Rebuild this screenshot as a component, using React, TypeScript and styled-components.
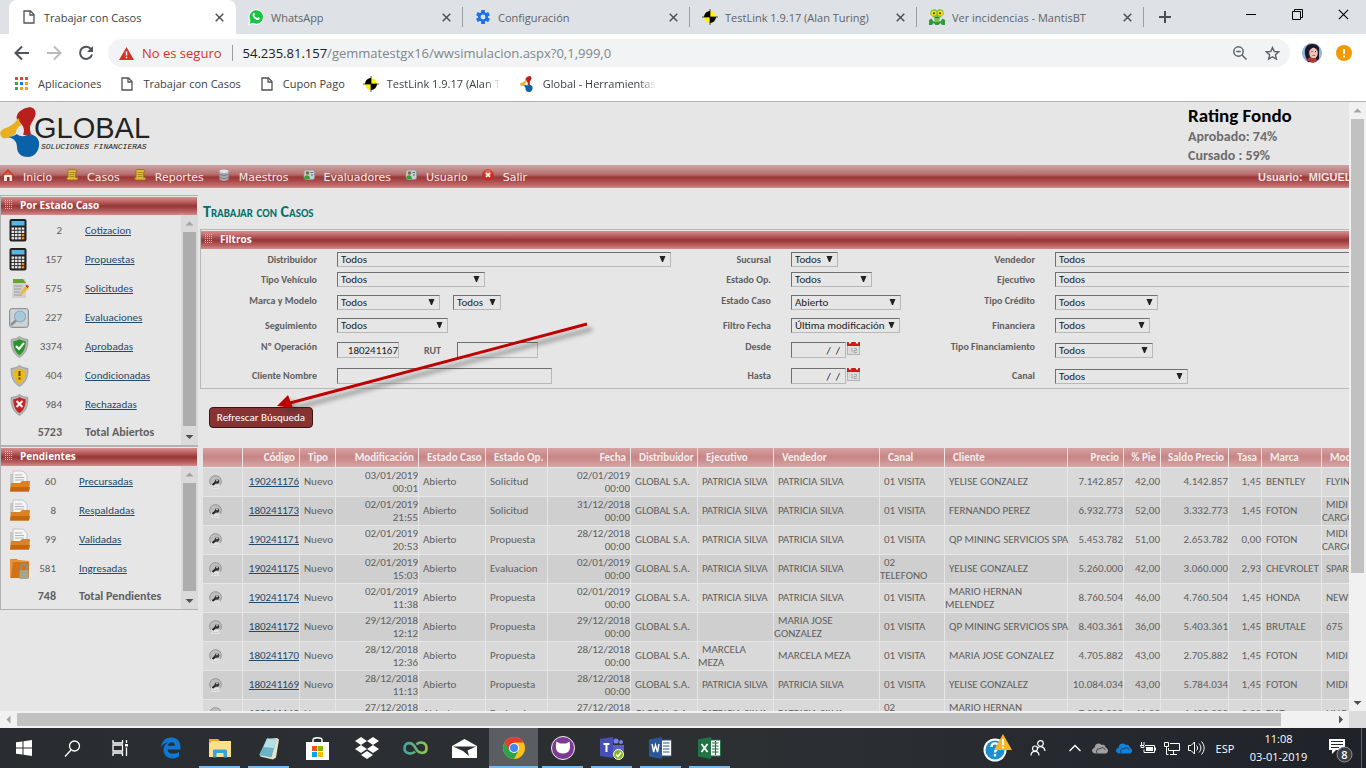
import React from 'react';
import styled, { createGlobalStyle, css } from 'styled-components';

const SEGOE = '"Open Sans", "Noto Sans", sans-serif';
const CALIBRI = 'Calibri, Carlito, "Open Sans", sans-serif';
const VERDANA = '"DejaVu Sans", "Noto Sans", sans-serif';

const GlobalStyle = createGlobalStyle`
  *, *::before, *::after { box-sizing: border-box; }
  body { margin: 0; overflow: hidden; background: #e6e6e6; }
  button, input, select { font-family: inherit; margin: 0; }
  svg { display: block; flex: none; }
`;

const Screen = styled.div`
  height: 100vh;
  display: flex;
  flex-direction: column;
  overflow: hidden;
  font-family: ${SEGOE};
`;

/* ---------- browser chrome ---------- */

const TabStrip = styled.div`
  display: flex;
  height: 34px;
  padding-left: 9px;
  background: #dee1e6;
  flex: none;
`;

const Tab = styled.div<{ $active?: boolean; $divided?: boolean }>`
  position: relative;
  display: flex;
  align-items: center;
  width: 227px;
  padding: 0 10px 0 12px;
  font-size: 11px;
  color: ${(p) => (p.$active ? '#3c4043' : '#5f6368')};
  background: ${(p) => (p.$active ? '#fff' : 'transparent')};
  border-radius: 8px 8px 0 0;
  ${(p) =>
    p.$divided &&
    css`
      &::after {
        content: '';
        position: absolute;
        right: 0;
        top: 7px;
        height: 20px;
        width: 1px;
        background: #9a9da1;
      }
    `}
`;

const TabTitle = styled.span`
  flex: 1;
  padding-left: 7px;
  white-space: nowrap;
`;

const IconSlot = styled.span`
  width: 16px;
  height: 16px;
  display: flex;
  align-items: center;
  justify-content: center;
`;

const IconButton = styled.button<{ $w?: number; $h?: number }>`
  display: flex;
  align-items: center;
  justify-content: center;
  width: ${(p) => p.$w ?? 32}px;
  height: ${(p) => p.$h ?? 28}px;
  padding: 0;
  border: 0;
  background: none;
  flex: none;
`;

const WindowControls = styled.div`
  display: flex;
  margin-left: auto;
`;

const Toolbar = styled.div`
  display: flex;
  align-items: center;
  height: 36px;
  padding: 2px 6px 0;
  background: #fff;
  flex: none;
`;

const Omnibox = styled.div`
  flex: 1;
  display: flex;
  align-items: center;
  height: 28px;
  margin: 0 6px;
  padding: 0 2px 0 11px;
  border-radius: 14px;
  background: #f1f3f4;
  font-size: 13px;
`;

const Insecure = styled.span`
  padding: 0 10px 0 8px;
  color: #d93025;
  white-space: nowrap;
`;

const UrlInput = styled.span`
  flex: 1;
  margin-left: 10px;
  color: #80868b;
  white-space: nowrap;
  b { font-weight: 400; color: #202124; }
`;

const Rule = styled.span<{ $h: number; $c: string }>`
  width: 1px;
  height: ${(p) => p.$h}px;
  background: ${(p) => p.$c};
`;

const BookmarkBar = styled.nav`
  display: flex;
  align-items: center;
  height: 32px;
  padding: 0 13px 4px;
  gap: 18px;
  background: #fff;
  border-bottom: 1px solid #b4b4b4;
  flex: none;
`;

const Bookmark = styled.a<{ $fade?: boolean }>`
  display: flex;
  align-items: center;
  gap: 8px;
  color: #3c4043;
  font-size: 11px;
  text-decoration: none;
  white-space: nowrap;
  ${(p) =>
    p.$fade &&
    css`
      max-width: 138px;
      overflow: hidden;
      mask-image: linear-gradient(90deg, #000 88%, transparent);
    `}
`;

/* ---------- scroll bars ---------- */

const ScrollTrack = styled.div<{ $across?: boolean; $dim?: boolean }>`
  display: flex;
  flex-direction: ${(p) => (p.$across ? 'row' : 'column')};
  align-items: center;
  flex: none;
  width: ${(p) => (p.$across ? 'auto' : '17px')};
  height: ${(p) => (p.$across ? '17px' : 'auto')};
  background: ${(p) => (p.$dim ? '#dadada' : '#f1f1f1')};
`;

const ScrollThumb = styled.div<{ $share: number; $across?: boolean; $dim?: boolean }>`
  flex: ${(p) => p.$share} 0 0;
  ${(p) => (p.$across ? 'height: 13px;' : 'width: 13px;')}
  background: ${(p) => (p.$dim ? '#adadad' : '#c1c1c1')};
`;

const ScrollRest = styled.div<{ $share: number }>`
  flex: ${(p) => p.$share} 0 0;
`;

const ARROWS = { up: '4.500,10.500 8.5,6.500 12.500,10.500', down: '4.500,7 8.5,11 12.500,7', left: '10.500,4.500 6.500,8.5 10.500,12.500', right: '7,4.500 11,8.5 7,12.500' };

function Arrow({ dir, faint }: { dir: keyof typeof ARROWS; faint?: boolean }) {
  return (
    <svg width="17" height="17">
      <polygon points={ARROWS[dir]} fill={faint ? '#a3a3a3' : '#505050'} />
    </svg>
  );
}

function Scrollbar({ thumb, rest, across, dim }: { thumb: number; rest: number; across?: boolean; dim?: boolean }) {
  return (
    <ScrollTrack $across={across} $dim={dim}>
      <Arrow dir={across ? 'left' : 'up'} faint />
      <ScrollThumb $share={thumb} $across={across} $dim={dim} />
      <ScrollRest $share={rest} />
      <Arrow dir={across ? 'right' : 'down'} />
    </ScrollTrack>
  );
}

/* ---------- page ---------- */

const Viewport = styled.div`
  position: relative;
  flex: 1;
  min-height: 0;
  display: grid;
  grid-template-columns: minmax(0, 1fr) 17px;
  grid-template-rows: minmax(0, 1fr) 17px;
`;

const Corner = styled.div`
  background: #dcdcdc;
`;

const Page = styled.div`
  overflow: hidden;
  min-width: 0;
  background: #e6e6e6;
  font-family: ${CALIBRI};
  font-size: 11px;
  color: #606060;
`;

const Header = styled.header`
  display: flex;
  justify-content: space-between;
  height: 63px;
`;

const Brand = styled.div`
  display: flex;
  padding-top: 5px;
`;

const BrandText = styled.div`
  display: flex;
  flex-direction: column;
  margin-left: -6px;
  padding-top: 6px;
  font-family: "Liberation Sans", sans-serif;
  font-size: 29px;
  line-height: 30px;
  color: #222;
  small {
    padding-left: 7px;
    font: italic 400 8px/8px "Liberation Mono", monospace;
    color: #222;
  }
`;

const Rating = styled.div`
  width: 161px;
  padding-top: 2px;
  font-size: 14px;
  font-weight: 700;
  line-height: 19px;
  color: #6c6c6c;
  h2 {
    margin: 0;
    font-size: 19px;
    line-height: 23px;
    color: #000;
  }
`;

const MenuBar = styled.nav`
  display: flex;
  height: 23px;
  padding-left: 2px;
  gap: 14px;
  background: linear-gradient(#cba5a5 0%, #b97272 38%, #ab5656 47%, #993636 52%, #a84646 66%, #c57474 94%, #cf9a9a 100%);
  font: 11px/26px ${VERDANA};
`;

const MenuItem = styled.a`
  display: flex;
  gap: 9px;
  color: #f4ecec;
  text-decoration: none;
  svg { margin-top: 4px; }
`;

const UserTag = styled.span`
  margin-left: auto;
  width: 91px;
  font: 700 11px/25px "Liberation Sans", sans-serif;
  color: #f0e4e4;
  white-space: pre;
  overflow: hidden;
`;

const Body = styled.div`
  display: flex;
  align-items: flex-start;
`;

const Sidebar = styled.aside`
  width: 198px;
  padding-top: 7px;
  flex: none;
`;

const Panel = styled.section`
  border: solid #b2b2b2;
  border-width: 1px 0 1px 1px;
  padding-top: 1px;
`;

const BarTitle = styled.h3`
  display: flex;
  align-items: center;
  gap: 7px;
  height: 18px;
  margin: 0 1px 0 0;
  padding: 0 0 2px 3px;
  background: linear-gradient(#d78f8f 0%, #c06868 22%, #993a3a 48%, #993a3a 54%, #bd6464 82%, #d48c8c 100%);
  color: #fff;
  font: 700 10px/16px ${SEGOE};
`;

const PanelBody = styled.div`
  display: flex;
`;

const StateTable = styled.table<{ $countEnd: number }>`
  flex: 1;
  align-self: flex-start;
  margin-top: 1px;
  border-collapse: collapse;
  table-layout: fixed;
  td {
    height: 29px;
    padding: 0;
  }
  td:nth-child(1) { width: 32px; padding-left: 8px; }
  td:nth-child(2) { width: ${(p) => p.$countEnd - 33}px; text-align: right; }
  td:nth-child(3) { padding-left: 23px; }
  tr:last-child td {
    height: 26px;
    font-size: 12px;
    font-weight: 700;
  }
`;

const DataLink = styled.a`
  color: #23496b;
  text-decoration: underline;
`;

const Main = styled.main`
  flex: 1;
  min-width: 0;
  overflow: hidden;
  padding: 0 0 0 2px;
`;

const PageTitle = styled.h1`
  margin: 0;
  padding: 7px 0 0 3px;
  height: 41px;
  font-size: 16px;
  line-height: 33px;
  font-variant: small-caps;
  color: #00706c;
`;

const FilterBox = styled.section`
  border: solid #b8b8b8;
  border-width: 1px 0 1px 1px;
  padding: 1px 0;
  h3 { margin: 0; }
`;

const FilterGrid = styled.form`
  display: grid;
  grid-template-columns: 116px 354px 100px 164px 100px 334px;
  grid-template-rows: 21px 19px 27px 19px 30px 22px;
  align-items: center;
`;

const FilterLabel = styled.label<{ $raised?: boolean }>`
  font-size: 10px;
  font-weight: 700;
  line-height: 24px;
  text-align: right;
  white-space: nowrap;
  ${(p) => p.$raised && 'align-self: start;'}
`;

const Controls = styled.div`
  display: flex;
  align-items: center;
  padding-left: 20px;
`;

const SelectWrap = styled.span<{ $w: number; $gap?: number }>`
  position: relative;
  flex: none;
  width: ${(p) => p.$w}px;
  margin-left: ${(p) => p.$gap ?? 0}px;
  svg {
    position: absolute;
    right: 5px;
    top: 4px;
    pointer-events: none;
  }
`;

const fieldFrame = css`
  border: 1px solid;
  border-color: #707070 #b8b8b8 #b8b8b8 #707070;
  border-radius: 0;
  background: transparent;
  color: #222;
  font-size: 11px;
`;

const SelectBox = styled.select`
  ${fieldFrame}
  display: block;
  appearance: none;
  width: 100%;
  height: 15px;
  padding: 0 0 0 3px;
  line-height: 13px;
`;

const TextBox = styled.input<{ $w: number }>`
  ${fieldFrame}
  width: ${(p) => p.$w}px;
  height: 16px;
  padding: 0;
  text-align: right;
`;

const InlineLabel = styled.label`
  width: 58px;
  padding-left: 25px;
  font-size: 10px;
  font-weight: 700;
`;

const CalendarButton = styled(IconButton)`
  margin: -5px 0 0 1px;
`;

const RefreshButton = styled.button`
  display: block;
  width: 104px;
  height: 21px;
  margin: 18px 0 19px 9px;
  padding: 0;
  border: 1px solid #3a1414;
  border-radius: 4px;
  background: #873333;
  color: #fff;
  font-size: 11px;
  line-height: 17px;
`;

const Grid = styled.table`
  width: 1260px;
  margin-left: 2px;
  border-collapse: separate;
  border-spacing: 1px;
  table-layout: fixed;
`;

const Th = styled.th<{ $num?: boolean }>`
  height: 19px;
  padding: 0 4px;
  background: linear-gradient(#d6a3a3, #c88686 45%, #cb8c8c 60%, #d8a6a6);
  color: #f3eeee;
  font-size: 11px;
  line-height: 13px;
  text-align: ${(p) => (p.$num ? 'right' : 'left')};
  text-indent: ${(p) => (p.$num ? 0 : 4)}px;
  white-space: nowrap;
`;

const Tr = styled.tr`
  background: #d9d9d9;
  &:nth-child(even) { background: #cfcfcf; }
`;

const Td = styled.td<{ $num?: boolean }>`
  height: 28px;
  padding: 0 0 1px;
  line-height: 13px;
  white-space: pre;
  text-align: ${(p) => (p.$num ? 'right' : 'left')};
  text-indent: ${(p) => (p.$num ? 0 : 4)}px;
  svg { margin: 1px 0 0 6px; }
`;

const Callout = styled.svg`
  position: absolute;
  left: 270px;
  top: 212px;
  pointer-events: none;
`;

/* ---------- task bar ---------- */

const TaskBar = styled.footer`
  display: flex;
  height: 40px;
  flex: none;
  background: linear-gradient(90deg, #292c30, #2d3033 55%, #1f2229);
  color: #fff;
`;

const TaskButton = styled.button<{ $w: number; $open?: boolean; $active?: boolean }>`
  position: relative;
  display: flex;
  align-items: center;
  justify-content: center;
  width: ${(p) => p.$w}px;
  padding: 0;
  border: 0;
  background: ${(p) => (p.$active ? '#5a5d61' : 'none')};
  ${(p) =>
    p.$open &&
    css`
      &::after {
        content: '';
        position: absolute;
        left: ${p.$active ? 0 : 4}px;
        right: ${p.$active ? 0 : 4}px;
        bottom: 0;
        height: 2px;
        background: #76b9ed;
      }
    `}
`;

const Pinned = styled.div`
  display: flex;
  margin-left: 2px;
`;

const Tray = styled.div`
  display: flex;
  align-items: center;
  margin-left: auto;
  padding-right: 4px;
  font-size: 11px;
`;

const Language = styled.span`
  width: 34px;
  text-align: center;
`;

const Clock = styled.time`
  width: 73px;
  line-height: 18px;
  text-align: center;
`;

/* ---------- drawings ---------- */

const DocIcon = () => (
  <svg width="12" height="14" viewBox="0 0 12 14" fill="none" stroke="#505356" strokeWidth="1.3">
    <path d="M1 1h6.500L11 4.500V13H1z" fill="#fff" />
    <path d="M7 1v4h4" />
  </svg>
);

const WhatsAppIcon = () => (
  <svg width="16" height="16" viewBox="0 0 16 16">
    <path d="M0 16l1.100-5A7.700 7.700 0 1 1 5 15z" fill="#fff" />
    <path d="M1.600 14.800l.9-3.400A6.700 6.700 0 1 1 5 13.800z" fill="#19c53f" />
    <path d="M5.200 4.200c.6-.6 1.100-.4 1.300.1l.5 1.200c.1.400-.6.900-.6 1.100.5 1.100 1.500 1.900 2.600 2.400.4.100.8-.9 1.200-.8l1.400.7c.3.200.2 1.700-1.200 2.100C8 11.500 4.500 8.300 4.500 5.700c0-.6.300-1.200.7-1.500z" fill="#fff" />
  </svg>
);

const GearIcon = () => (
  <svg width="14" height="14" viewBox="-7 -7 14 14">
    <g fill="#1a73e8">
      {[0, 60, 120].map((a) => (
        <rect key={a} x="-1.900" y="-7" width="3.800" height="14" rx=".6" transform={`rotate(${a})`} />
      ))}
      <circle r="5" />
    </g>
    <circle r="2.400" fill="#dee1e6" />
  </svg>
);

const TestLinkIcon = () => (
  <svg width="16" height="16" viewBox="-8 -8 16 16">
    <circle r="6" fill="#ffef00" />
    <path d="M0 0V-6A6 6 0 0 0-6 0zM0 0V6A6 6 0 0 0 6 0z" fill="#000" />
    <path d="M0-8V8M-8 0H8" stroke="#000" strokeWidth=".7" />
  </svg>
);

const MantisIcon = () => (
  <svg width="16" height="16" viewBox="0 0 16 16">
    <path d="M0 16V11l2.500-1.500L5 13l3-4 3 4 2.500-3.500L16 11v5h-3l-1.500-2-2 2h-3l-2-2L3 16z" fill="#2f9a3c" />
    <path d="M2 1l4-1 2 1.500L10 0l4 1 1 4-4 4-1 4H6L5 9 1 5z" fill="#7cc043" />
    <circle cx="4.700" cy="4" r="2.600" fill="#ffe000" />
    <circle cx="11.300" cy="4" r="2.600" fill="#ffe000" />
    <circle cx="5" cy="4.200" r="1" fill="#222" />
    <circle cx="11" cy="4.200" r="1" fill="#222" />
    <path d="M6 8.500h4" stroke="#2b7d2b" />
  </svg>
);

const CloseIcon = ({ size = 9, color = '#4a4d51', width = 1.6 }) => (
  <svg width={size} height={size} viewBox="0 0 10 10" stroke={color} strokeWidth={width}>
    <path d="M.8.8l8.400 8.400M9.200.8L.8 9.200" />
  </svg>
);

const GlobalMark = ({ w = 36, h = 50 }) => (
  <svg width={w} height={h} viewBox="0 0 40 50">
    <path d="M28 .5c6-1 9 4 7 9-2 5-5 7-5 12 0 3 1 6 2 9l-9-3c2-4 1-8-3-12-3-3-4-4-3-7 1-4 6-7 11-8z" fill="#b8201e" />
    <path d="M19 11c0 3 1 5 3 7-4 1-6 4-6 8-3 3-8 6-13 5-3-2-4-6-1-8 2-2 5-2 8-4 4-2 6-5 9-8z" fill="#e8b020" />
    <path d="M8 30c3 0 6-1 9-3 3 3 8 3 13 0 4 1 8 3 9 8 1 9-5 15-11 15-8 0-11-5-11-10 0-6-4-9-9-10z" fill="#0b61a8" />
  </svg>
);

const AppsIcon = () => {
  const colors = ['#ea4335', '#ea4335', '#ea4335', '#34a853', '#1a73e8', '#f2a600', '#34a853', '#f2a600', '#f2a600'];
  return (
    <svg width="17" height="14" viewBox="0 0 17 14">
      {colors.map((c, i) => (
        <rect key={i} x={2 + (i % 3) * 5} y={Math.floor(i / 3) * 5} width="3" height="3" fill={c} />
      ))}
    </svg>
  );
};

const GripIcon = () => (
  <svg width="9" height="12" viewBox="0 0 9 12">
    {Array.from({ length: 20 }, (_, i) => (
      <rect key={i} x={1 + (i % 4) * 2} y={1 + Math.floor(i / 4) * 2} width="1" height="1" fill="#e8b4b4" />
    ))}
  </svg>
);

const Caret = () => (
  <svg width="7" height="6" viewBox="0 0 7 6">
    <path d="M.5 0h6L4 6H3z" fill="#222" />
  </svg>
);

const HomeIcon = () => (
  <svg width="12" height="12" viewBox="0 0 12 12">
    <path d="M2 6h8v6H2z" fill="#f3e6dd" />
    <path d="M0 6l6-6 6 6-1 1.500L6 3 1 7.500z" fill="#d83a20" />
    <path d="M5 8h2.500v4H5z" fill="#8d3020" />
  </svg>
);
const ScrollIcon = () => (
  <svg width="12" height="12" viewBox="0 0 12 12">
    <path d="M3 .5h6c1.500 0 2 1 2 2.500H9.700v5.500H12c0 1.500-.6 2.500-1.700 2.500H2.500C1 11 .5 10 .5 8.500H2V2.500C2 1.200 2.300.5 3 .5z" fill="#dfb93c" stroke="#8f6c14" strokeWidth=".8" />
    <path d="M3.500 3.500h5M3.500 5.500h5M3.500 7.500h5" stroke="#94731b" strokeWidth=".7" />
  </svg>
);
const DiskIcon = () => (
  <svg width="12" height="12" viewBox="0 0 12 12">
    <path d="M1.500 2v8c0 2.400 9 2.400 9 0V2z" fill="#a9adb2" />
    <path d="M1.500 5c1 1.800 8 1.800 9 0M1.500 8c1 1.800 8 1.800 9 0" fill="none" stroke="#75797e" />
    <ellipse cx="6" cy="2.200" rx="4.500" ry="1.700" fill="#e1e4e7" />
  </svg>
);
const CardIcon = () => (
  <svg width="12" height="12" viewBox="0 0 12 12">
    <rect x="1" y="1" width="10.500" height="9.500" rx="2" fill="#c3ced2" stroke="#8c989d" strokeWidth=".7" />
    <path d="M7.500 3.500H10M8 6h2" stroke="#5b7180" />
    <circle cx="4.500" cy="4" r="1.800" fill="#8a6a3c" />
    <path d="M1 10c0-5 6-5 6 0z" fill="#31a333" />
  </svg>
);
const ExitIcon = () => (
  <svg width="12" height="12" viewBox="0 0 12 12">
    <circle cx="6" cy="6" r="5.700" fill="#c92a1e" />
    <circle cx="6" cy="4" r="3.500" fill="#e0604f" />
    <path d="M4 4l4 4M8 4L4 8" stroke="#fff" strokeWidth="1.600" />
  </svg>
);

const CalculatorIcon = () => (
  <svg width="18" height="23" viewBox="0 0 18 23">
    <rect x=".5" y="0" width="17" height="22.500" rx="2" fill="#222" />
    <rect x="2.500" y="2" width="13" height="4.500" fill="#58b6e6" />
    {Array.from({ length: 16 }, (_, i) => (
      <rect key={i} x={2.5 + (i % 4) * 3.4} y={8.5 + Math.floor(i / 4) * 3.2} width="2.600" height="2.300" fill={i === 11 || i === 15 ? '#f08a24' : '#e4e4e4'} />
    ))}
  </svg>
);
const NotesIcon = () => (
  <svg width="20" height="21" viewBox="0 0 20 21">
    <path d="M4 1h12l1 3v16H3z" fill="#cfd1cf" />
    <path d="M4 1h10l3 4H4z" fill="#64a52a" />
    <path d="M5 8h8M5 11h7M5 14h6M5 17h8" stroke="#9a9a9a" />
    <path d="M11 17l1-4 5-5 2.500 2.500-5 5z" fill="#eeb93c" />
    <path d="M16.500 8L18 6.500l2 2-1.500 1.800z" fill="#c13d2b" />
  </svg>
);
const LensIcon = () => (
  <svg width="20" height="20" viewBox="0 0 20 20">
    <rect x=".7" y=".7" width="18.600" height="18.600" rx="2" fill="#d0d3d5" stroke="#7f8386" />
    <circle cx="11" cy="8.500" r="5.500" fill="#a8c9dc" stroke="#93a9b6" strokeWidth="1.200" />
    <path d="M7 12.500L2 17" stroke="#8c9094" strokeWidth="2.400" />
  </svg>
);
const ShieldIcon = ({ kind }: { kind: 'ok' | 'warn' | 'bad' }) => {
  const fill = { ok: '#27962a', warn: '#eab81f', bad: '#c62222' }[kind];
  const mark = { ok: 'M6 10l3 3 5-6', warn: 'M9.500 6v5M9.500 12.500v2', bad: 'M6.500 7l6 6M12.500 7l-6 6' }[kind];
  return (
    <svg width="20" height="22" viewBox="-1 0 20 22">
      <path d="M9.500.5C12 2.500 15 3 18 3.500c0 8.500-2 14-8.500 18C3 17.500 1 12 1 3.500 4 3 7 2.500 9.500.5z" fill="#b5b6b5" stroke="#858585" strokeWidth=".6" />
      <path d="M9.500 3c2 1.400 4 2 6.300 2.200C15.500 12 14 16 9.500 19.300 5 16 3.500 12 3.200 5.200 5.500 5 7.500 4.400 9.500 3z" fill={fill} />
      <path d={mark} fill="none" stroke={kind === 'warn' ? '#5a4300' : '#fff'} strokeWidth="2" />
    </svg>
  );
};
const FolderIcon = ({ locked }: { locked?: boolean }) => (
  <svg width="22" height="23" viewBox="0 0 22 23">
    {locked ? (
      <>
        <path d="M1 2h7l1 2h11v17H2z" fill="#d0721a" />
        <path d="M3 3h5v2H3z" fill="#f5d9b4" />
        <path d="M1 2v19h1l2-16h16V4" fill="#e79138" />
        <path d="M12 13v-3c0-4 6-4 6 0v3" fill="none" stroke="#8f8f84" strokeWidth="1.800" />
        <rect x="10.500" y="13" width="9" height="9" rx="1" fill="#a3a58c" />
      </>
    ) : (
      <>
        <path d="M1 4h3v14H1z" fill="#c9c9c9" />
        <path d="M4 1h10l4 4v9H4z" fill="#f4f4f4" stroke="#bbb" strokeWidth=".8" />
        <path d="M6 5h7M6 7.500h9M6 10h9" stroke="#b5b5b5" />
        <path d="M1 21.500l1-8.500h9l2-2h8l-1 10.500z" fill="#dc8124" />
        <path d="M1 21.500l1-4.500h19l-1 4.500H1z" fill="#c0670f" />
      </>
    )}
  </svg>
);

const RowLens = () => (
  <svg width="13" height="14" viewBox="0 0 13 14">
    <ellipse cx="6.500" cy="13" rx="4.500" ry="1" fill="#e4e4e4" />
    <circle cx="6.500" cy="6.500" r="5.900" fill="#bdbdbd" stroke="#8a8a8a" strokeWidth=".8" />
    <path d="M1.500 9.500a5.500 5.500 0 0 0 10 0z" fill="#e2e2e2" />
    <path d="M3.500 10L7 7" stroke="#222" strokeWidth="2" />
    <circle cx="8" cy="6.500" r="2.300" fill="#333" />
    <circle cx="8" cy="5.300" r="1.100" fill="#bbb" />
  </svg>
);

const CalendarIcon = () => (
  <svg width="13" height="14" viewBox="0 0 13 14">
    <rect x=".5" y="1.500" width="12" height="12" fill="#dcdcdc" stroke="#b3b3b3" />
    <path d="M0 1h13v4H0z" fill="#cf1a1a" />
    <circle cx="3" cy="1.500" r="1.200" fill="#eee" />
    <circle cx="10" cy="1.500" r="1.200" fill="#eee" />
    <path d="M4 7.500h1v4M7 7.500h2.500v2H7v2h3" fill="none" stroke="#aaa" />
  </svg>
);

/* ---------- data ---------- */

type StateRow = { icon: React.ReactNode; count: string; name: string };

const caseStates: StateRow[] = [
  { icon: <CalculatorIcon />, count: '2', name: 'Cotizacion' },
  { icon: <CalculatorIcon />, count: '157', name: 'Propuestas' },
  { icon: <NotesIcon />, count: '575', name: 'Solicitudes' },
  { icon: <LensIcon />, count: '227', name: 'Evaluaciones' },
  { icon: <ShieldIcon kind="ok" />, count: '3374', name: 'Aprobadas' },
  { icon: <ShieldIcon kind="warn" />, count: '404', name: 'Condicionadas' },
  { icon: <ShieldIcon kind="bad" />, count: '984', name: 'Rechazadas' },
];

const pendingStates: StateRow[] = [
  { icon: <FolderIcon />, count: '60', name: 'Precursadas' },
  { icon: <FolderIcon />, count: '8', name: 'Respaldadas' },
  { icon: <FolderIcon />, count: '99', name: 'Validadas' },
  { icon: <FolderIcon locked />, count: '581', name: 'Ingresadas' },
];

const columns: { title: string; width: number; num?: boolean }[] = [
  { title: '', width: 39 },
  { title: 'Código', width: 56, num: true },
  { title: 'Tipo', width: 35 },
  { title: 'Modificación', width: 82, num: true },
  { title: 'Estado Caso', width: 66 },
  { title: 'Estado Op.', width: 61 },
  { title: 'Fecha', width: 82, num: true },
  { title: 'Distribuidor', width: 66 },
  { title: 'Ejecutivo', width: 75 },
  { title: 'Vendedor', width: 105 },
  { title: 'Canal', width: 64 },
  { title: 'Cliente', width: 122 },
  { title: 'Precio', width: 55, num: true },
  { title: '% Pie', width: 36, num: true },
  { title: 'Saldo Precio', width: 67, num: true },
  { title: 'Tasa', width: 32, num: true },
  { title: 'Marca', width: 59 },
  { title: 'Modelo', width: 139 },
];

const cases: string[][] = [
  ['190241176', '03/01/2019\n00:01', 'Solicitud', '02/01/2019', 'PATRICIA SILVA', 'PATRICIA SILVA', '01 VISITA', 'YELISE GONZALEZ', '7.142.857', '42,00', '4.142.857', '1,45', 'BENTLEY', 'FLYING SPUR'],
  ['180241173', '02/01/2019\n21:55', 'Solicitud', '31/12/2018', 'PATRICIA SILVA', 'PATRICIA SILVA', '01 VISITA', 'FERNANDO PEREZ', '6.932.773', '52,00', '3.332.773', '1,45', 'FOTON', 'MIDI\nCARGO'],
  ['190241171', '02/01/2019\n20:53', 'Propuesta', '28/12/2018', 'PATRICIA SILVA', 'PATRICIA SILVA', '01 VISITA', 'QP MINING SERVICIOS SPA', '5.453.782', '51,00', '2.653.782', '0,00', 'FOTON', 'MIDI\nCARGO'],
  ['190241175', '02/01/2019\n15:03', 'Evaluacion', '02/01/2019', 'PATRICIA SILVA', 'PATRICIA SILVA', '02\nTELEFONO', 'YELISE GONZALEZ', '5.260.000', '42,00', '3.060.000', '2,93', 'CHEVROLET', 'SPARK'],
  ['190241174', '02/01/2019\n11:38', 'Propuesta', '02/01/2019', 'PATRICIA SILVA', 'PATRICIA SILVA', '01 VISITA', 'MARIO HERNAN\nMELENDEZ', '8.760.504', '46,00', '4.760.504', '1,45', 'HONDA', 'NEW CIVIC'],
  ['180241172', '29/12/2018\n12:12', 'Propuesta', '29/12/2018', '', 'MARIA JOSE\nGONZALEZ', '01 VISITA', 'QP MINING SERVICIOS SPA', '8.403.361', '36,00', '5.403.361', '1,45', 'BRUTALE', '675'],
  ['180241170', '28/12/2018\n12:36', 'Propuesta', '28/12/2018', 'MARCELA\nMEZA', 'MARCELA MEZA', '01 VISITA', 'MARIA JOSE GONZALEZ', '4.705.882', '43,00', '2.705.882', '1,45', 'FOTON', 'MIDI CARGO'],
  ['180241169', '28/12/2018\n11:13', 'Propuesta', '28/12/2018', 'PATRICIA SILVA', 'PATRICIA SILVA', '01 VISITA', 'YELISE GONZALEZ', '10.084.034', '43,00', '5.784.034', '1,45', 'FOTON', 'MIDI CARGO'],
  ['180241168', '27/12/2018\n17:20', 'Evaluacion', '27/12/2018', 'PATRICIA SILVA', 'PATRICIA SILVA', '02\nTELEFONO', 'MARIO HERNAN\nMELENDEZ', '7.300.000', '41,00', '4.400.000', '0,92', 'FIAT', 'UNO'],
];

/* ---------- pieces ---------- */

function StatePanel({ title, rows, total, totalName, countEnd }: {
  title: string; rows: StateRow[]; total: string; totalName: string; countEnd: number;
}) {
  return (
    <Panel>
      <BarTitle><GripIcon />{title}</BarTitle>
      <PanelBody>
        <StateTable $countEnd={countEnd}>
          <tbody>
            {rows.map((r) => (
              <tr key={r.name}>
                <td>{r.icon}</td>
                <td>{r.count}</td>
                <td><DataLink href="#">{r.name}</DataLink></td>
              </tr>
            ))}
            <tr>
              <td />
              <td>{total}</td>
              <td>{totalName}</td>
            </tr>
          </tbody>
        </StateTable>
        <Scrollbar thumb={98} rest={1} dim />
      </PanelBody>
    </Panel>
  );
}

function Select({ id, w, value = 'Todos', gap }: { id: string; w: number; value?: string; gap?: number }) {
  return (
    <SelectWrap $w={w} $gap={gap}>
      <SelectBox id={id} defaultValue={value}><option>{value}</option></SelectBox>
      <Caret />
    </SelectWrap>
  );
}

function Filter({ id, label, raised, children }: { id: string; label: string; raised?: boolean; children: React.ReactNode }) {
  return (
    <>
      <FilterLabel htmlFor={id} $raised={raised}>{label}</FilterLabel>
      <Controls>{children}</Controls>
    </>
  );
}

function DateField({ id, name }: { id: string; name: string }) {
  return (
    <>
      <TextBox id={id} $w={55} defaultValue="/  /  " />
      <CalendarButton $w={13} $h={14} type="button" aria-label={`Calendario ${name}`}><CalendarIcon /></CalendarButton>
    </>
  );
}

const tabs = [
  { title: 'Trabajar con Casos', icon: <DocIcon /> },
  { title: 'WhatsApp', icon: <WhatsAppIcon /> },
  { title: 'Configuración', icon: <GearIcon /> },
  { title: 'TestLink 1.9.17 (Alan Turing)', icon: <TestLinkIcon /> },
  { title: 'Ver incidencias - MantisBT', icon: <MantisIcon /> },
];

const menu = [
  { name: 'Inicio', icon: <HomeIcon /> },
  { name: 'Casos', icon: <ScrollIcon /> },
  { name: 'Reportes', icon: <ScrollIcon /> },
  { name: 'Maestros', icon: <DiskIcon /> },
  { name: 'Evaluadores', icon: <CardIcon /> },
  { name: 'Usuario', icon: <CardIcon /> },
  { name: 'Salir', icon: <ExitIcon /> },
];

function Browser() {
  return (
    <>
      <TabStrip>
        {tabs.map((t, i) => (
          <Tab key={t.title} $active={i === 0} $divided={i > 0}>
            <IconSlot>{t.icon}</IconSlot>
            <TabTitle>{t.title}</TabTitle>
            <IconButton $w={14} aria-label="Cerrar pestaña"><CloseIcon /></IconButton>
          </Tab>
        ))}
        <IconButton $w={42} $h={34} aria-label="Nueva pestaña">
          <svg width="12" height="12" stroke="#4a4d51" strokeWidth="2"><path d="M6 0v12M0 6h12" /></svg>
        </IconButton>
        <WindowControls>
          <IconButton $w={46} aria-label="Minimizar"><svg width="10" height="10" stroke="#000"><path d="M0 5.500h10" /></svg></IconButton>
          <IconButton $w={46} aria-label="Restaurar">
            <svg width="11" height="11" fill="none" stroke="#000"><path d="M.5 2.500h8v8h-8zM2.500 2.500v-2h8v8h-2" /></svg>
          </IconButton>
          <IconButton $w={46} aria-label="Cerrar"><CloseIcon size={11} color="#000" width={1} /></IconButton>
        </WindowControls>
      </TabStrip>
      <Toolbar>
        <IconButton aria-label="Atrás">
          <svg width="16" height="16" viewBox="0 0 16 16" fill="none" stroke="#505458" strokeWidth="2"><path d="M15 8H2M8 1.500L1.500 8 8 14.500" /></svg>
        </IconButton>
        <IconButton aria-label="Adelante">
          <svg width="16" height="16" viewBox="0 0 16 16" fill="none" stroke="#b9bbbe" strokeWidth="2"><path d="M1 8h13M8 1.500L14.500 8 8 14.500" /></svg>
        </IconButton>
        <IconButton aria-label="Recargar">
          <svg width="16" height="16" viewBox="0 0 16 16" fill="none" stroke="#505458" strokeWidth="2"><path d="M13.300 4.500A6.100 6.100 0 1 0 14 9.500" /><path d="M15 1v6H9z" fill="#505458" stroke="none" /></svg>
        </IconButton>
        <Omnibox>
          <svg width="15" height="13" viewBox="0 0 15 13"><path d="M7.500 0L15 13H0z" fill="#d93025" /><path d="M7.500 4.500v4M7.500 9.700v1.600" stroke="#fff" strokeWidth="1.500" /></svg>
          <Insecure>No es seguro</Insecure>
          <Rule $h={16} $c="#9a9da1" />
          <UrlInput><b>54.235.81.157</b>/gemmatestgx16/wwsimulacion.aspx?0,1,999,0</UrlInput>
          <IconButton aria-label="Zoom">
            <svg width="14" height="14" viewBox="0 0 14 14" fill="none" stroke="#5f6368" strokeWidth="1.500"><circle cx="5.500" cy="5.500" r="4.700" /><path d="M3.200 5.500h4.600M9 9l4.500 4.500" /></svg>
          </IconButton>
          <IconButton aria-label="Favorito">
            <svg width="15" height="15" viewBox="0 0 15 15" fill="none" stroke="#5f6368" strokeWidth="1.400"><path d="M7.500 1.500l1.800 4 4.400.4-3.300 2.900 1 4.300-3.900-2.300-3.900 2.300 1-4.300L1.300 5.900l4.400-.4z" /></svg>
          </IconButton>
        </Omnibox>
        <IconButton aria-label="Perfil">
          <svg width="20" height="20" viewBox="0 0 20 20">
            <circle cx="10" cy="10" r="10" fill="#8fb4df" />
            <path d="M4 15C1 7 4 1 10 1s8 3 7 8c0 4 0 5 0 7l-4 3H6z" fill="#1f1626" />
            <ellipse cx="11.500" cy="10" rx="4.300" ry="5.500" fill="#ecc3bb" />
            <path d="M6 8c2-1 4-3 5-4 2 1 4 2 5 4l1-3-5-3-5 1z" fill="#1f1626" />
            <path d="M4 17l4-3 3 1.500L14 15l1 3-4 2z" fill="#b23a2c" />
            <path d="M9.500 8.500h1M13 8.500h1" stroke="#4a2c30" />
            <path d="M10.500 12.500h2.500" stroke="#c0535a" />
          </svg>
        </IconButton>
        <IconButton aria-label="Actualizar navegador">
          <svg width="16" height="16" viewBox="0 0 16 16"><circle cx="8" cy="8" r="8" fill="#f29900" /><path d="M8 4v5M8 10.500v2" stroke="#fff" strokeWidth="2" /></svg>
        </IconButton>
      </Toolbar>
      <BookmarkBar>
        <Bookmark href="#"><AppsIcon />Aplicaciones</Bookmark>
        <Bookmark href="#"><IconSlot><DocIcon /></IconSlot>Trabajar con Casos</Bookmark>
        <Bookmark href="#"><IconSlot><DocIcon /></IconSlot>Cupon Pago</Bookmark>
        <Bookmark href="#" $fade><TestLinkIcon />TestLink 1.9.17 (Alan Turing)</Bookmark>
        <Bookmark href="#" $fade><IconSlot><GlobalMark w={15} h={16} /></IconSlot>Global - Herramientas</Bookmark>
      </BookmarkBar>
    </>
  );
}

function Filters() {
  return (
    <FilterBox>
      <BarTitle><GripIcon />Filtros</BarTitle>
      <FilterGrid onSubmit={(e) => e.preventDefault()}>
        <Filter id="dist" label="Distribuidor"><Select id="dist" w={334} /></Filter>
        <Filter id="suc" label="Sucursal"><Select id="suc" w={47} /></Filter>
        <Filter id="vend" label="Vendedor"><Select id="vend" w={314} /></Filter>

        <Filter id="tipov" label="Tipo Vehículo"><Select id="tipov" w={148} /></Filter>
        <Filter id="eop" label="Estado Op."><Select id="eop" w={81} /></Filter>
        <Filter id="ejec" label="Ejecutivo"><Select id="ejec" w={314} /></Filter>

        <Filter id="marca" label="Marca y Modelo" raised>
          <Select id="marca" w={103} />
          <Select id="modelo" w={48} gap={13} />
        </Filter>
        <Filter id="ecaso" label="Estado Caso" raised><Select id="ecaso" w={110} value="Abierto" /></Filter>
        <Filter id="tcred" label="Tipo Crédito" raised><Select id="tcred" w={103} /></Filter>

        <Filter id="seg" label="Seguimiento"><Select id="seg" w={111} /></Filter>
        <Filter id="ffecha" label="Filtro Fecha"><Select id="ffecha" w={109} value="Última modificación" /></Filter>
        <Filter id="fin" label="Financiera"><Select id="fin" w={95} /></Filter>

        <Filter id="oper" label="Nº Operación" raised>
          <TextBox id="oper" $w={62} defaultValue="180241167" />
          <InlineLabel htmlFor="rut">RUT</InlineLabel>
          <TextBox id="rut" $w={81} />
        </Filter>
        <Filter id="desde" label="Desde" raised><DateField id="desde" name="desde" /></Filter>
        <Filter id="tfin" label="Tipo Financiamiento" raised><Select id="tfin" w={98} /></Filter>

        <Filter id="cli" label="Cliente Nombre"><TextBox id="cli" $w={215} /></Filter>
        <Filter id="hasta" label="Hasta"><DateField id="hasta" name="hasta" /></Filter>
        <Filter id="canal" label="Canal"><Select id="canal" w={133} /></Filter>
      </FilterGrid>
    </FilterBox>
  );
}

function CaseTable() {
  return (
    <Grid>
      <colgroup>{columns.map((c) => <col key={c.title} width={c.width} />)}</colgroup>
      <thead>
        <tr>{columns.map((c) => <Th key={c.title} $num={c.num}>{c.title}</Th>)}</tr>
      </thead>
      <tbody>
        {cases.map(([code, modified, op, date, ...rest]) => {
          const cells = ['Nuevo', modified, 'Abierto', op, `${date}\n00:00`, 'GLOBAL S.A.', ...rest];
          return (
            <Tr key={code}>
              <Td><RowLens /></Td>
              <Td $num><DataLink href="#">{code}</DataLink></Td>
              {cells.map((text, i) => <Td key={columns[i + 2].title} $num={columns[i + 2].num}>{text}</Td>)}
            </Tr>
          );
        })}
      </tbody>
    </Grid>
  );
}

function Windows() {
  return (
    <TaskBar>
      <TaskButton $w={48} aria-label="Inicio"><svg width="16" height="16" viewBox="0 0 16 16"><path d="M0 2.300l6.500-.9v6.100H0zM7.500 1.200L16 0v7.500H7.500zM0 8.500h6.500v6.100L0 13.700zM7.500 8.500H16V16l-8.500-1.200z" fill="#fff" /></svg></TaskButton>
      <TaskButton $w={48} aria-label="Buscar"><svg width="17" height="17" viewBox="0 0 17 17" fill="none" stroke="#fff" strokeWidth="1.300"><circle cx="10.500" cy="6" r="5" /><path d="M7 10l-6 6.500" /></svg></TaskButton>
      <TaskButton $w={48} aria-label="Vista de tareas"><svg width="17" height="16" viewBox="0 0 17 16" fill="none" stroke="#fff" strokeWidth="1.300"><path d="M1 0v3h9.500V0M1 16v-3h9.500v3M1 5h9.500v6H1zM14.500 0v3M14.500 7.500V16" /><path d="M13 4h3v2.500h-3z" fill="#fff" stroke="none" /></svg></TaskButton>
      <Pinned>
        <TaskButton $w={49} aria-label="Edge"><svg width="21" height="22" viewBox="0 0 21 22"><path d="M1 10C2 3.500 6 .5 11 .5c6 0 9.500 4 9.500 9.500v2.500H7.500c.3 4.500 6.500 5.500 11.500 2.500v4.500C12.500 23.500 3.500 21 3.500 13c0-3.500 2-6.500 5-7.500C5 5.500 2.500 7.500 1 10zm6.800-1.200H15C15 4 8.300 4.200 7.800 8.800z" fill="#0f78d4" /></svg></TaskButton>
        <TaskButton $w={49} $open aria-label="Explorador"><svg width="22" height="20" viewBox="0 0 22 20"><path d="M0 1h9l1.500 2H22v16H0z" fill="#ffe08a" /><path d="M0 1h9l1.500 2H2v2H0z" fill="#e9a92c" /><path d="M4 19.500V13c0-1 .5-1.500 1.500-1.500h11c1 0 1.500.5 1.500 1.500v6.500h-3.500V15h-7v4.500z" fill="#37a3dc" /></svg></TaskButton>
        <TaskButton $w={49} $open aria-label="Bloc de notas"><svg width="22" height="23" viewBox="0 0 22 23"><path d="M9 2l10-1 2 1.500-3 18-3 2-13-3z" fill="#e9e2c8" /><path d="M9 1.500l9.500 1-5 18L1 18z" fill="#6bb4c8" /><path d="M9 1.500l9.500 1L16 11 5.500 10z" fill="#b5e0ea" /></svg></TaskButton>
        <TaskButton $w={49} aria-label="Tienda"><svg width="23" height="23" viewBox="0 0 23 23"><path d="M7 6V3c0-3 9-3 9 0v3" fill="none" stroke="#fff" strokeWidth="1.500" /><path d="M0 5h23v18H0z" fill="#fff" /><path d="M6 9h5v5H6z" fill="#f25022" /><path d="M12 9h5v5h-5z" fill="#7fba00" /><path d="M6 15h5v5H6z" fill="#00a4ef" /><path d="M12 15h5v5h-5z" fill="#ffb900" /></svg></TaskButton>
        <TaskButton $w={49} aria-label="Dropbox"><svg width="24" height="22" viewBox="0 0 24 22"><path d="M6 0l6 4-6 4-6-4zM18 0l6 4-6 4-6-4zM6 8l6 4-6 4-6-4zM18 8l6 4-6 4-6-4zM12 14l6 4-6 4-6-4z" fill="#fff" /></svg></TaskButton>
        <TaskButton $w={49} aria-label="Infinito">
          <svg width="25" height="14" viewBox="0 0 25 14" fill="none" strokeWidth="2.600">
            <defs><linearGradient id="inf"><stop offset="0" stopColor="#3fa8a0" /><stop offset="1" stopColor="#8fc64b" /></linearGradient></defs>
            <path d="M12 10.500C9.500 13.500 1.500 13.500 1.500 7S9.500.5 12.500 7 23.500 13.500 23.500 7 16 .5 13.500 3.500" stroke="url(#inf)" />
          </svg>
        </TaskButton>
        <TaskButton $w={49} aria-label="Correo"><svg width="25" height="19" viewBox="0 0 25 19"><path d="M0 7L12.500 0 25 7v12H0z" fill="#fff" /><path d="M1 7.500h23l-8.500 4 1.500 5.500-6-5z" fill="#2b2e32" /></svg></TaskButton>
        <TaskButton $w={49} $open $active aria-label="Chrome"><svg width="22" height="22" viewBox="-11 -11 22 22"><circle r="11" fill="#fbc116" /><path d="M-9.500-5.500A11 11 0 0 1 9.500-5.500H0L-4.800 2.500z" fill="#e33b2e" /><path d="M-9.500-5.500L-4.300 3 0 5 0 11A11 11 0 0 1-9.500-5.500z" fill="#2ba24c" /><path d="M0 11L4.500 2.500 0 5-4 3z" fill="#2ba24c" /><circle r="5" fill="#fff" /><circle r="4" fill="#4285f4" /></svg></TaskButton>
        <TaskButton $w={49} $open aria-label="GitHub"><svg width="24" height="24" viewBox="-12 -12 24 24"><circle r="11.500" fill="#7c3a94" stroke="#eee" /><path d="M-6.500-6.500L-3-4.500H3L6.500-6.500C8 0 7 5.500 0 5.500S-8 0-6.500-6.500z" fill="#fff" /></svg></TaskButton>
        <TaskButton $w={49} $open aria-label="Teams"><svg width="24" height="24" viewBox="0 0 24 24"><circle cx="16" cy="5" r="2.600" fill="#7b83eb" /><circle cx="21" cy="6" r="2" fill="#7b83eb" /><path d="M13 9h11v6c0 5-9 7-11 2z" fill="#5b62c4" /><path d="M0 3l13-2v21L0 20z" fill="#464eb8" /><path d="M3.500 8h6M6.500 8v8" stroke="#fff" strokeWidth="2" /><circle cx="18.500" cy="18.500" r="5" fill="#86b817" stroke="#fff" /><path d="M16 18.500l2 2 3-4" fill="none" stroke="#fff" strokeWidth="1.500" /></svg></TaskButton>
        <TaskButton $w={49} $open aria-label="Word"><svg width="23" height="22" viewBox="0 0 23 22"><path d="M12 3h10.500v16H12z" fill="#fff" stroke="#2b579a" /><path d="M14 6h6.500M14 9h6.500M14 12h6.500M14 15h6.500" stroke="#2b579a" strokeWidth="1.200" /><path d="M0 2.500L13 0v22L0 19.500z" fill="#2b579a" /><path d="M3 7l1.700 8L6.500 8l2 7L10 7" fill="none" stroke="#fff" strokeWidth="1.400" /></svg></TaskButton>
        <TaskButton $w={49} $open aria-label="Excel"><svg width="23" height="22" viewBox="0 0 23 22"><path d="M12 3h10.500v16H12z" fill="#fff" stroke="#217346" /><path d="M14 6h6.500M14 9h6.500M14 12h6.500M14 15h6.500M17.500 4v14" stroke="#217346" strokeWidth="1.200" /><path d="M0 2.500L13 0v22L0 19.500z" fill="#217346" /><path d="M3.500 7l6 8M9.500 7l-6 8" stroke="#fff" strokeWidth="1.800" /></svg></TaskButton>
      </Pinned>
      <Tray>
        <IconButton $w={32} aria-label="Ayuda"><svg width="30" height="30" viewBox="0 0 30 30"><circle cx="12" cy="17" r="11.500" fill="#fff" /><circle cx="12" cy="17" r="9.500" fill="#1b8fd0" /><path d="M8.500 14c0-5 7-4.500 7-.5 0 3-3.500 2.500-3.500 6M12 21v2.500" fill="none" stroke="#fff" strokeWidth="2.300" /><path d="M20 1l9 16H11z" fill="#f5b526" /><path d="M20 6v6M20 13.500v2" stroke="#fff" strokeWidth="2" /></svg></IconButton>
        <IconButton $w={48} aria-label="Contactos"><svg width="16" height="16" viewBox="0 0 16 16" fill="none" stroke="#fff" strokeWidth="1.200"><circle cx="10.500" cy="3.500" r="2.800" /><path d="M7.500 8.500c2-3 7-2 7.500 2.500" /><circle cx="5" cy="8.500" r="2.500" /><path d="M1 15.500c0-5.500 8-5.500 8 0" /></svg></IconButton>
        <IconButton $w={26} aria-label="Iconos ocultos"><svg width="12" height="8" viewBox="0 0 12 8" fill="none" stroke="#fff" strokeWidth="1.400"><path d="M.5 7L6 1.500 11.500 7" /></svg></IconButton>
        {['#a0a0a0', '#0f82dc'].map((c) => (
          <IconButton key={c} $w={24} aria-label="OneDrive"><svg width="16" height="11" viewBox="0 0 16 11"><path d="M4 10.500c-5 0-5-5-1.500-5.500C2.500 1 7-1 9.500 2c3-1 4 1 4 2.500 3 .5 3.500 5.500 0 6z" fill={c} /><path d="M5.500 10.500C3 7 6 5 8 6c1.500-2.500 5-1 5 1" fill="none" stroke="#26292e" strokeWidth=".8" /></svg></IconButton>
        ))}
        <IconButton $w={24} aria-label="Batería"><svg width="16" height="12" viewBox="0 0 16 12" fill="none" stroke="#fff"><path d="M5 3.500h9.500v7H4v-3M15.500 5.500v3M0 3.500h4M1.500 0v3M4 0v3M1 4v1.500h3V4" /><path d="M6 5h7v4H6z" fill="#fff" stroke="none" /></svg></IconButton>
        <IconButton $w={24} aria-label="Red"><svg width="16" height="13" viewBox="0 0 16 13" fill="none" stroke="#fff"><path d="M6 1.500h9.500v7h-11V6M9.500 9v3M6 12.500h7M.5.500h4v4h-4zM2.500 5v7.500h2" /></svg></IconButton>
        <IconButton $w={24} aria-label="Volumen"><svg width="17" height="14" viewBox="0 0 17 14" fill="none" stroke="#fff"><path d="M.5 4.500h2.500L6.500 1v12L3 9.500H.5zM8.500 4.500c1.500 1.500 1.500 3.500 0 5M11 2.500c2.500 3 2.500 6 0 9M13.500.500c3.500 4 3.500 9 0 13" /></svg></IconButton>
        <Language>ESP</Language>
        <Clock>11:08<br />03-01-2019</Clock>
        <IconButton $w={46} $h={40} aria-label="Notificaciones">
          <svg width="32" height="30" viewBox="0 0 32 30">
            <path d="M7 6h16v11h-9l-4 4v-4H7z" fill="#fff" />
            <path d="M9 8.500h12M9 11.500h12M9 14.500h8" stroke="#26292e" />
            <circle cx="22.500" cy="21.500" r="7.500" fill="#3b3e44" stroke="#8e9094" />
            <text x="22.500" y="25.500" fill="#fff" fontSize="11" fontWeight="600" textAnchor="middle">8</text>
          </svg>
        </IconButton>
        <Rule $h={40} $c="#5a5d62" />
      </Tray>
    </TaskBar>
  );
}

export default function App() {
  return (
    <Screen>
      <GlobalStyle />
      <Browser />
      <Viewport>
        <Page>
          <Header>
            <Brand>
              <GlobalMark w={40} />
              <BrandText>GLOBAL<small>SOLUCIONES FINANCIERAS</small></BrandText>
            </Brand>
            <Rating>
              <h2>Rating Fondo</h2>
              <div>Aprobado: 74%</div>
              <div>Cursado : 59%</div>
            </Rating>
          </Header>
          <MenuBar>
            {menu.map((m) => <MenuItem key={m.name} href="#">{m.icon}{m.name}</MenuItem>)}
            <UserTag>{'Usuario:  MIGUEL'}</UserTag>
          </MenuBar>
          <Body>
            <Sidebar>
              <StatePanel title="Por Estado Caso" rows={caseStates} total="5723" totalName="Total Abiertos" countEnd={62} />
              <StatePanel title="Pendientes" rows={pendingStates} total="748" totalName="Total Pendientes" countEnd={56} />
            </Sidebar>
            <Main>
              <PageTitle>Trabajar con Casos</PageTitle>
              <Filters />
              <RefreshButton type="button">Refrescar Búsqueda</RefreshButton>
              <CaseTable />
            </Main>
          </Body>
        </Page>
        <Scrollbar thumb={454} rest={121} />
        <Scrollbar across thumb={1264} rest={51} />
        <Corner />
        <Callout width="330" height="110" viewBox="0 0 330 110">
          <defs><filter id="soft" x="-10%" y="-10%" width="120%" height="130%"><feGaussianBlur stdDeviation="2" /></filter></defs>
          <g filter="url(#soft)" opacity=".4" transform="translate(5 5)">
            <path d="M317 10L20 89" stroke="#333" strokeWidth="4" />
            <path d="M8 92L18 80l5 13z" fill="#333" />
          </g>
          <path d="M317 10L20 89" stroke="#c00000" strokeWidth="3" />
          <path d="M7 92L18 81l5 13z" fill="#c00000" />
        </Callout>
      </Viewport>
      <Windows />
    </Screen>
  );
}
